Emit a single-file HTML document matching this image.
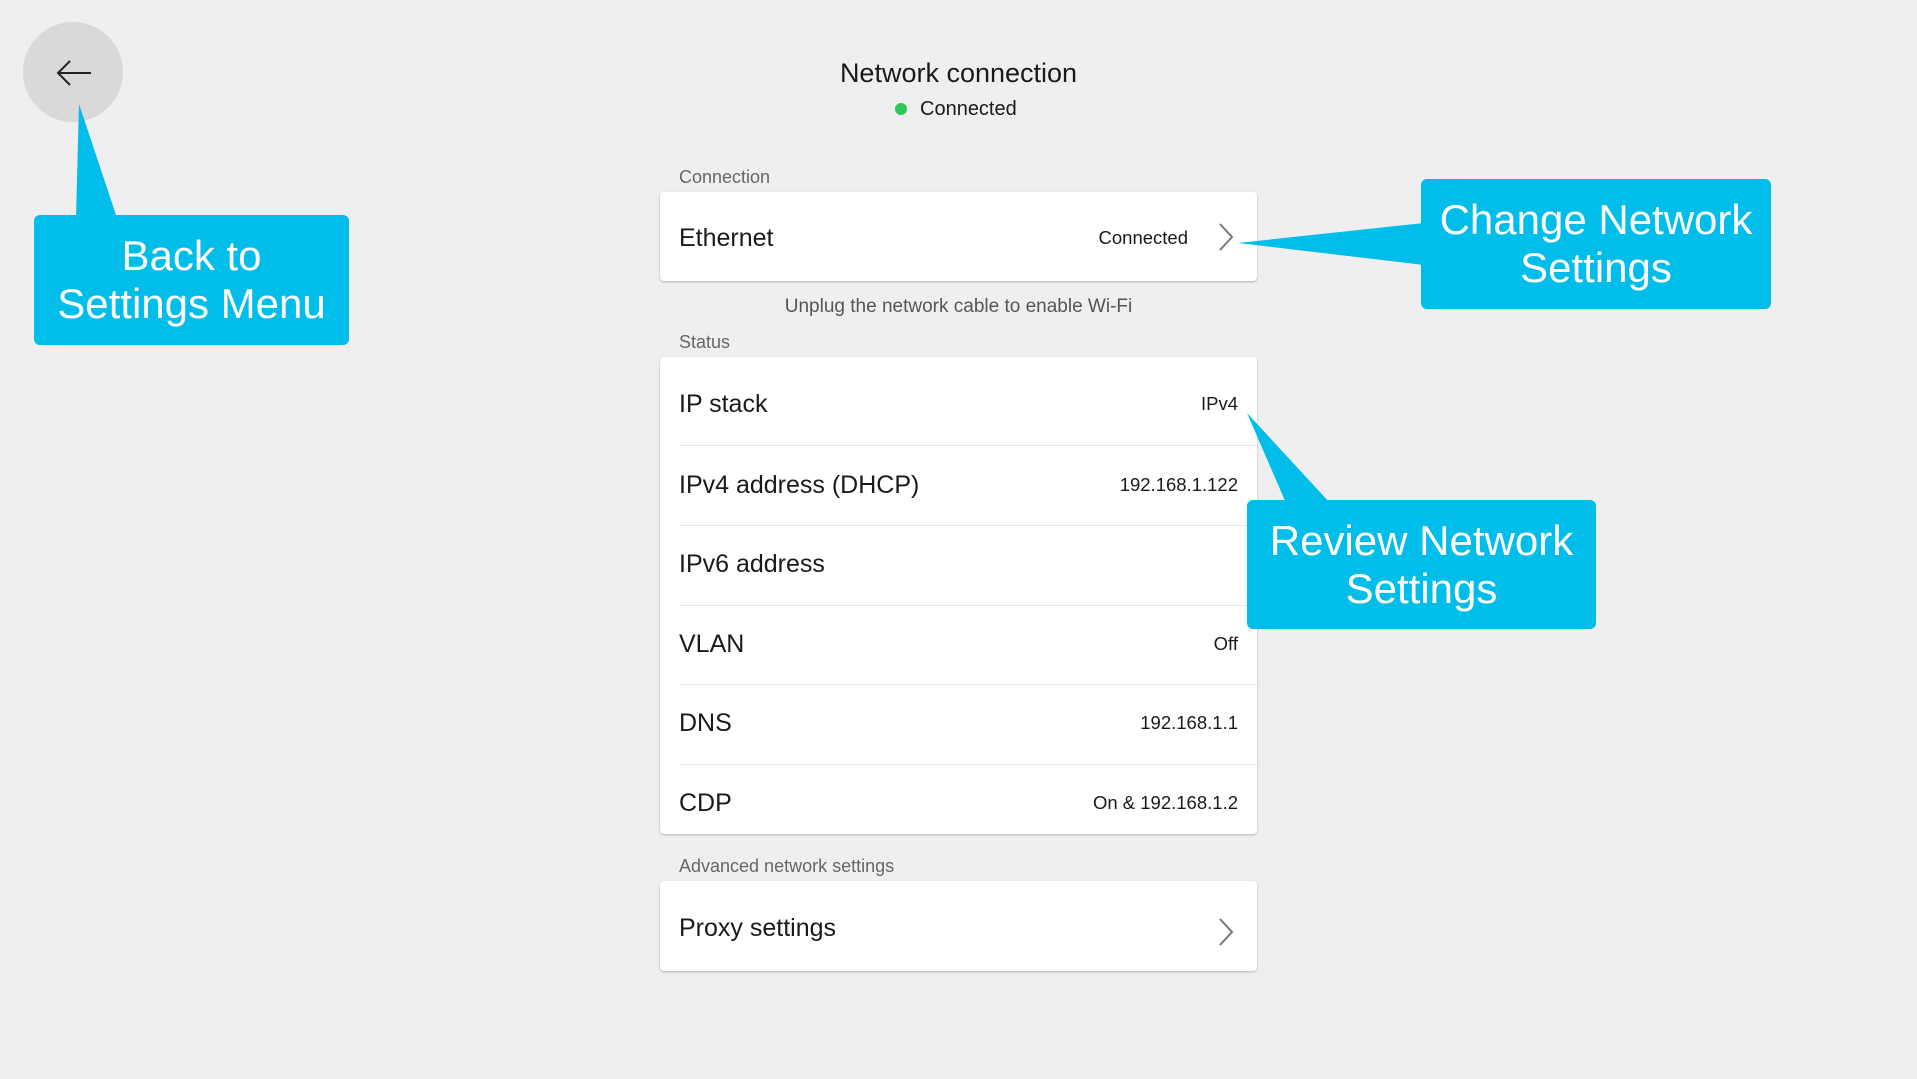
<!DOCTYPE html>
<html><head><meta charset="utf-8"><style>
*{margin:0;padding:0;box-sizing:border-box}
body{width:1917px;height:1079px;background:#efefef;font-family:"Liberation Sans",sans-serif;position:relative;overflow:hidden;color:#1a1a1a}
.abs{position:absolute}
.card{position:absolute;left:660px;width:597px;background:#fff;border-radius:4px;box-shadow:0 1px 2px rgba(0,0,0,.25)}
.lbl{position:absolute;left:679px;font-size:18px;color:#666}
.row{position:absolute;left:19px;right:19px;height:80px;display:flex;align-items:center;justify-content:space-between;font-size:25px}
.row span.v{font-size:18.5px}
.sep{position:absolute;left:19px;right:0;height:1px;background:#e6e6e6}
.callout{position:absolute;background:#00bdea;border-radius:6px;color:#fff;font-size:42px;text-align:center;line-height:48px;display:flex;align-items:center;justify-content:center}
</style></head><body>
<div class="abs" style="left:23px;top:22px;width:100px;height:100px;border-radius:50%;background:#d9d9d9"></div>
<svg class="abs" style="left:55px;top:58px" width="38" height="30" viewBox="0 0 38 30"><path d="M36 15H3M15 3L3 15L15 27" fill="none" stroke="#222" stroke-width="2"/></svg>

<div class="abs" style="left:0;width:1917px;top:58px;text-align:center;font-size:27px">Network connection</div>
<div class="abs" style="left:895px;top:103px;width:12px;height:12px;border-radius:50%;background:#2ec85a"></div>
<div class="abs" style="left:920px;top:98px;font-size:20px">Connected</div>

<div class="lbl" style="top:167px">Connection</div>
<div class="card" style="top:192px;height:89px">
 <div class="row" style="top:6px"><span>Ethernet</span><span class="v" style="margin-right:50px">Connected</span></div>
 <svg class="abs" style="left:557px;top:30px" width="18" height="30" viewBox="0 0 18 30"><path d="M3 2L15 15L3 28" fill="none" stroke="#777" stroke-width="2"/></svg>
</div>
<div class="abs" style="left:0;width:1917px;top:296px;text-align:center;font-size:19px;color:#555">Unplug the network cable to enable Wi-Fi</div>

<div class="lbl" style="top:332px">Status</div>
<div class="card" style="top:357px;height:477px">
 <div class="row" style="top:7px"><span>IP stack</span><span class="v">IPv4</span></div>
 <div class="sep" style="top:88px"></div>
 <div class="row" style="top:88px"><span>IPv4 address (DHCP)</span><span class="v">192.168.1.122</span></div>
 <div class="sep" style="top:168px"></div>
 <div class="row" style="top:167px"><span>IPv6 address</span><span class="v"></span></div>
 <div class="sep" style="top:248px"></div>
 <div class="row" style="top:247px"><span>VLAN</span><span class="v">Off</span></div>
 <div class="sep" style="top:327px"></div>
 <div class="row" style="top:326px"><span>DNS</span><span class="v">192.168.1.1</span></div>
 <div class="sep" style="top:407px"></div>
 <div class="row" style="top:406px"><span>CDP</span><span class="v">On &amp; 192.168.1.2</span></div>
</div>

<div class="lbl" style="top:856px">Advanced network settings</div>
<div class="card" style="top:881px;height:90px">
 <div class="row" style="top:7px"><span>Proxy settings</span></div>
 <svg class="abs" style="left:557px;top:36px" width="18" height="30" viewBox="0 0 18 30"><path d="M3 2L15 15L3 28" fill="none" stroke="#777" stroke-width="2"/></svg>
</div>

<svg class="abs" style="left:0;top:0" width="1917" height="1079">
 <polygon points="76,218 117,218 79,104" fill="#00bdea"/>
 <polygon points="1424,223 1424,265 1238,243" fill="#00bdea"/>
 <polygon points="1286,503 1330,503 1247,413" fill="#00bdea"/>
</svg>
<div class="callout" style="left:34px;top:215px;width:315px;height:130px">Back to<br>Settings Menu</div>
<div class="callout" style="left:1421px;top:179px;width:350px;height:130px">Change Network<br>Settings</div>
<div class="callout" style="left:1247px;top:500px;width:349px;height:129px">Review Network<br>Settings</div>
</body></html>
